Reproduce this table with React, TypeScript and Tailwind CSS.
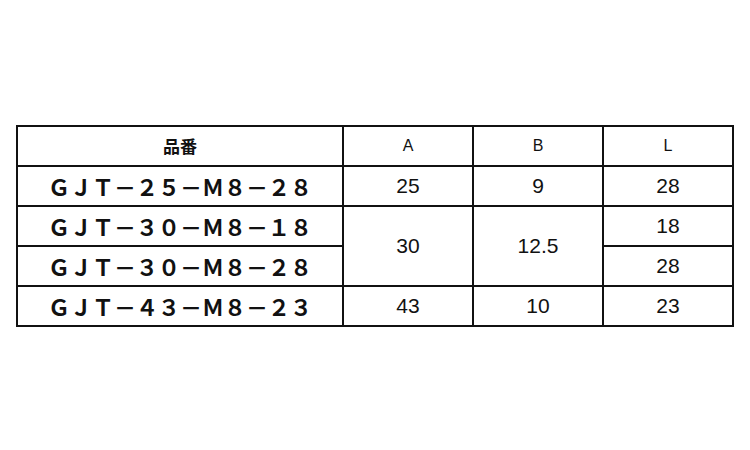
const rows = [
  { code: "ＧＪＴ－２５－Ｍ８－２８", a: "25", b: "9", l: "28" },
  { code: "ＧＪＴ－３０－Ｍ８－１８", a: "30", b: "12.5", l: "18", span: true },
  { code: "ＧＪＴ－３０－Ｍ８－２８", l: "28", merged: true },
  { code: "ＧＪＴ－４３－Ｍ８－２３", a: "43", b: "10", l: "23" },
];

const cell = "border-2 border-[#111] text-center align-middle p-0";
const num = "text-[21px] text-[#111] [font-family:'Liberation_Sans',Arial,sans-serif]";
const head = `${cell} text-[16px] font-normal text-[#111] [font-family:'Liberation_Sans',Arial,sans-serif]`;

export default function App() {
  return (
    <div className="w-[750px] h-[450px] bg-white pt-[125px] pl-[16px]">
      <table className="border-collapse table-fixed w-[718px]">
        <colgroup>
          <col className="w-[326px]" />
          <col className="w-[130px]" />
          <col className="w-[130px]" />
          <col className="w-[130px]" />
        </colgroup>
        <thead>
          <tr className="h-[40px]">
            <th className={`${cell} text-[17px] font-bold text-[#111] [font-family:'Noto_Sans_CJK_JP',sans-serif]`}>
              品番
            </th>
            <th className={head}>A</th>
            <th className={head}>B</th>
            <th className={head}>L</th>
          </tr>
        </thead>
        <tbody>
          {rows.map((r) => (
            <tr key={r.code} className="h-[40px]">
              <td className={`${cell} text-[22px] leading-none font-semibold text-[#111] [font-family:'Noto_Sans_CJK_JP',sans-serif]`}>
                {r.code}
              </td>
              {!r.merged && (
                <>
                  <td className={`${cell} ${num}`} rowSpan={r.span ? 2 : 1}>
                    {r.a}
                  </td>
                  <td className={`${cell} ${num}`} rowSpan={r.span ? 2 : 1}>
                    {r.b}
                  </td>
                </>
              )}
              <td className={`${cell} ${num}`}>{r.l}</td>
            </tr>
          ))}
        </tbody>
      </table>
    </div>
  );
}
